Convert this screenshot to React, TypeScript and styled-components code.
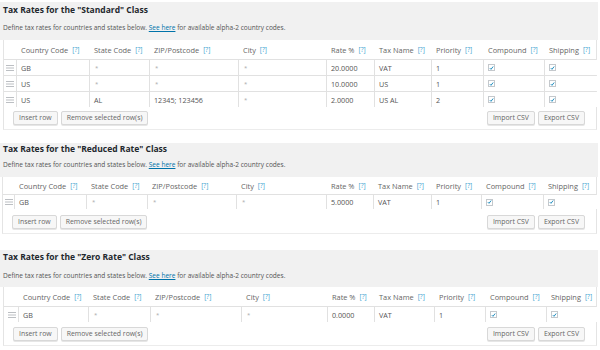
import React from "react";
import styled, { createGlobalStyle } from "styled-components";

const Global = createGlobalStyle`
  html, body { margin: 0; padding: 0; background: #fff; }
  body { font-family: "Open Sans", "Noto Sans", sans-serif; color: #333; }
`;

type Dims = {
  top: number;
  padTop: number;
  titleLH: number;
  descGap: number;
  padBottom: number;
  headH: number;
  rowH: number;
  footTop: number;
  footBottom: number;
  left: number;
  handleLeft: number;
};

type RowData = {
  country: string;
  state: string;
  zip: string;
  city: string;
  rate: string;
  name: string;
  priority: string;
};

type SectionData = {
  title: string;
  cols: number[];
  rows: RowData[];
  dims: Dims;
};

const star = "*";

const sections: SectionData[] = [
  {
    title: 'Tax Rates for the "Standard" Class',
    cols: [12, 73, 60, 89, 88, 48, 57, 52, 61, 54],
    rows: [
      { country: "GB", state: star, zip: star, city: star, rate: "20.0000", name: "VAT", priority: "1" },
      { country: "US", state: star, zip: star, city: star, rate: "10.0000", name: "US", priority: "1" },
      { country: "US", state: "AL", zip: "12345; 123456", city: star, rate: "2.0000", name: "US AL", priority: "2" },
    ],
    dims: { top: 2, padTop: 1, titleLH: 14, descGap: 6, padBottom: 7, headH: 19, rowH: 16, footTop: 4, footBottom: 4, left: 3, handleLeft: 0 },
  },
  {
    title: 'Tax Rates for the "Reduced Rate" Class',
    cols: [11, 72, 61, 89, 90, 47, 58, 50, 62, 55],
    rows: [
      { country: "GB", state: star, zip: star, city: star, rate: "5.0000", name: "VAT", priority: "1" },
    ],
    dims: { top: 13, padTop: 0, titleLH: 12, descGap: 5, padBottom: 7, headH: 17, rowH: 15, footTop: 6, footBottom: 4, left: 2, handleLeft: 0 },
  },
  {
    title: 'Tax Rates for the "Zero Rate" Class',
    cols: [14, 70, 62, 91, 86, 47, 60, 51, 61, 52],
    rows: [
      { country: "GB", state: star, zip: star, city: star, rate: "0.0000", name: "VAT", priority: "1" },
    ],
    dims: { top: 16, padTop: 0, titleLH: 14, descGap: 7, padBottom: 6, headH: 19, rowH: 16, footTop: 5, footBottom: 4, left: 3, handleLeft: 2 },
  },
];

const headers = [
  "",
  "Country Code",
  "State Code",
  "ZIP/Postcode",
  "City",
  "Rate %",
  "Tax Name",
  "Priority",
  "Compound",
  "Shipping",
];

const Page = styled.div`
  width: 600px;
  display: flex;
  flex-direction: column;
`;

const Section = styled.section<{ $d: Dims }>`
  margin-top: ${(p) => p.$d.top}px;
  display: flex;
  flex-direction: column;
`;

const Head = styled.div<{ $d: Dims }>`
  background: #f1f1f1;
  width: 598px;
  box-sizing: border-box;
  padding: ${(p) => p.$d.padTop}px 3px ${(p) => p.$d.padBottom}px 3px;
  display: flex;
  flex-direction: column;
`;

const Title = styled.h3<{ $d: Dims }>`
  margin: 0;
  font-size: 8.5px;
  font-weight: 700;
  line-height: ${(p) => p.$d.titleLH}px;
  color: #23282d;
  white-space: nowrap;
`;

const Desc = styled.p<{ $d: Dims }>`
  margin: ${(p) => p.$d.descGap}px 0 0 0;
  font-size: 6.55px;
  line-height: 10px;
  color: #555;
  white-space: nowrap;
`;

const Link = styled.a`
  color: #0073aa;
  text-decoration: underline;
`;

const Body = styled.div<{ $d: Dims }>`
  margin-left: ${(p) => p.$d.left}px;
  width: ${(p) => 597 - p.$d.left}px;
  box-sizing: border-box;
  border-left: 1px solid #e4e4e4;
  border-right: 1px solid #e4e4e4;
  border-bottom: 1px solid #ececec;
  display: flex;
  flex-direction: column;
`;

const Row = styled.div<{ $cols: string; $h: number; $head?: boolean }>`
  display: grid;
  grid-template-columns: ${(p) => p.$cols};
  height: ${(p) => p.$h}px;
  ${(p) => (p.$head ? "" : "border-top: 1px solid #e1e1e1;")}
  box-sizing: border-box;
  &:last-of-type {
    border-bottom: 1px solid #e1e1e1;
  }
`;

const HeadCell = styled.div`
  display: flex;
  align-items: center;
  padding-left: 5px;
  font-size: 7.4px;
  color: #666;
  white-space: nowrap;
  overflow: hidden;
`;

const Help = styled.span`
  color: #3a9fcf;
  margin-left: 4px;
  font-size: 6.6px;
`;

const Cell = styled.div`
  display: flex;
  align-items: center;
  padding-left: 4px;
  font-size: 7.2px;
  color: #555;
  border-left: 1px solid #e1e1e1;
  white-space: nowrap;
  overflow: hidden;
  background: #fff;
`;

const Star = styled.span`
  color: #aaa;
  font-size: 6px;
  padding-left: 1px;
`;

const HandleCell = styled.div<{ $off: number }>`
  display: flex;
  align-items: center;
  justify-content: center;
  padding-left: ${(p) => p.$off}px;
`;

const Box = styled.span`
  width: 7px;
  height: 7px;
  box-sizing: border-box;
  border: 1px solid #c4c8cc;
  background: #fff;
  display: flex;
  align-items: center;
  justify-content: center;
`;

const Foot = styled.div<{ $d: Dims }>`
  display: flex;
  justify-content: space-between;
  padding: ${(p) => p.$d.footTop}px 11px ${(p) => p.$d.footBottom}px 9px;
`;

const Group = styled.div`
  display: flex;
  gap: 3px;
`;

const Button = styled.button`
  height: 14px;
  padding: 0 5px;
  box-sizing: border-box;
  font-family: "Open Sans", "Noto Sans", sans-serif;
  font-size: 6.9px;
  color: #666;
  background: #f7f7f7;
  border: 1px solid #d8d8d8;
  border-radius: 2px;
  box-shadow: 0 1px 0 #e6e6e6;
  line-height: 12px;
  white-space: nowrap;
`;

const Handle = () => (
  <svg width="8" height="6" viewBox="0 0 8 6">
    <path d="M0 0.5H8M0 3H8M0 5.5H8" stroke="#b4b8bc" strokeWidth="0.9" />
  </svg>
);

const Check = () => (
  <Box>
    <svg width="6" height="6" viewBox="0 0 6 6">
      <path d="M1 3.2L2.4 4.6L5 1.2" fill="none" stroke="#1e8cbe" strokeWidth="1.2" />
    </svg>
  </Box>
);

const Val = ({ v }: { v: string }) => (v === star ? <Star>*</Star> : <>{v}</>);

const TaxSection = ({ s }: { s: SectionData }) => {
  const cols = s.cols.map((c) => `${c}px`).join(" ");
  return (
    <Section $d={s.dims}>
      <Head $d={s.dims}>
        <Title $d={s.dims}>{s.title}</Title>
        <Desc $d={s.dims}>
          Define tax rates for countries and states below. <Link>See here</Link> for available alpha-2 country codes.
        </Desc>
      </Head>
      <Body $d={s.dims}>
        <Row $cols={cols} $h={s.dims.headH} $head>
          {headers.map((h, i) =>
            i === 0 ? (
              <div key={i} />
            ) : (
              <HeadCell key={i}>
                {h}
                <Help>[?]</Help>
              </HeadCell>
            )
          )}
        </Row>
        {s.rows.map((r, i) => (
          <Row key={i} $cols={cols} $h={s.dims.rowH}>
            <HandleCell $off={s.dims.handleLeft}>
              <Handle />
            </HandleCell>
            <Cell>{r.country}</Cell>
            <Cell><Val v={r.state} /></Cell>
            <Cell><Val v={r.zip} /></Cell>
            <Cell><Val v={r.city} /></Cell>
            <Cell>{r.rate}</Cell>
            <Cell>{r.name}</Cell>
            <Cell>{r.priority}</Cell>
            <Cell><Check /></Cell>
            <Cell><Check /></Cell>
          </Row>
        ))}
        <Foot $d={s.dims}>
          <Group>
            <Button>Insert row</Button>
            <Button>Remove selected row(s)</Button>
          </Group>
          <Group>
            <Button>Import CSV</Button>
            <Button>Export CSV</Button>
          </Group>
        </Foot>
      </Body>
    </Section>
  );
};

export default function App() {
  return (
    <Page>
      <Global />
      {sections.map((s, i) => (
        <TaxSection key={i} s={s} />
      ))}
    </Page>
  );
}
